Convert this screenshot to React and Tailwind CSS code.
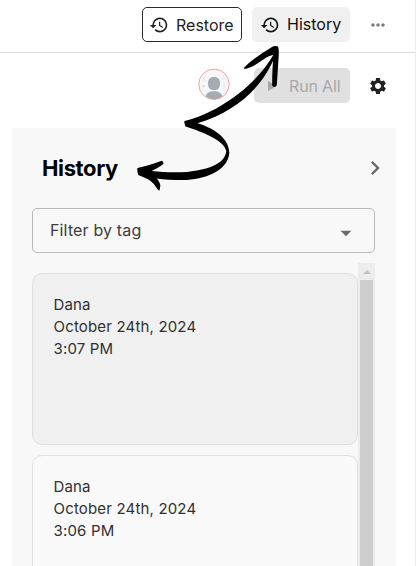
import {
  MdArrowDropDown,
  MdChevronRight,
  MdHistory,
  MdMoreHoriz,
  MdPlayArrow,
  MdSettings,
} from "react-icons/md";

const versions = [
  { author: "Dana", date: "October 24th, 2024", time: "3:07 PM", selected: true },
  { author: "Dana", date: "October 24th, 2024", time: "3:06 PM", selected: false },
];

function Avatar() {
  return (
    <svg className="size-8" viewBox="0 0 32 32">
      <circle cx="16" cy="16.3" r="15.2" fill="#f5f7fb" stroke="#f5a097" strokeWidth="1" />
      <path d="M5 10l3 4M24 12l3-3M25 20l2 2" stroke="#f3dcdc" strokeWidth="1" />
      <path d="M26 14v6M6 23l3 1" stroke="#dcebd8" strokeWidth="1" />
      <circle cx="5.5" cy="18" r="0.9" fill="#dfd36a" />
      <path d="M10 15.500c0-4.200 1.800-6.500 6-6.500s6 2.300 6 6.500c0 4.200-2 6.700-6 6.700s-6-2.500-6-6.700z" fill="#a6abb2" />
      <path d="M7.600 28.600c.6-3.400 3.400-5.400 8.400-5.400s7.800 2 8.400 5.400A15 15 0 0 1 7.600 28.600z" fill="#a6abb2" />
    </svg>
  );
}

function Header() {
  return (
    <header className="flex h-[53px] shrink-0 items-start gap-[10px] border-b border-[#dedede] pl-[142px] pt-[7px]">
      <button className="flex h-[35px] w-[100px] items-center gap-[7px] rounded-[5px] border border-[#2a2a2a] pl-[6px] text-base text-[#222]">
        <MdHistory size={20} />
        Restore
      </button>
      <button className="flex h-[35px] w-[98px] items-center gap-[7px] rounded-[5px] bg-[#f0f0f0] pl-[8px] text-base text-[#111]">
        <MdHistory size={20} />
        <span className="-mt-px">History</span>
      </button>
      <MdMoreHoriz className="ml-[8px] mt-[8px] text-[#777]" size={20} />
    </header>
  );
}

function Toolbar() {
  return (
    <div className="flex h-[75px] shrink-0 items-start pl-[198px] pt-[15px]">
      <Avatar />
      <button className="ml-6 flex h-[35px] w-24 items-center gap-[9px] rounded-[5px] bg-[#e0e0e0] pl-[8px] text-base tracking-[-0.01em] text-[#a8a8a8]">
        <MdPlayArrow size={18} />
        Run All
      </button>
      <MdSettings className="ml-[18px] mt-[8px] text-[#222]" size={20} />
    </div>
  );
}

function VersionCard({ version }) {
  return (
    <div
      className={`h-[172px] shrink-0 rounded-[10px] border border-[#dfdfdf] px-[20.5px] pt-[20px] text-[15px] leading-[22px] tracking-[0.17px] text-[#303030] ${
        version.selected ? "bg-[#f0f0f0]" : "bg-[#f9f9f9]"
      }`}
    >
      <p>{version.author}</p>
      <p>{version.date}</p>
      <p>{version.time}</p>
    </div>
  );
}

function Scrollbar() {
  return (
    <div className="flex w-[17px] shrink-0 flex-col items-center bg-[#ececec]">
      <div className="flex h-[17px] items-center">
        <svg width="8" height="4" viewBox="0 0 8 4">
          <path d="M0 4L4 0l4 4z" fill="#c2c2c2" />
        </svg>
      </div>
      <div className="w-[13px] flex-1 bg-[#cdcdcd]" />
    </div>
  );
}

function HistoryPanel() {
  return (
    <section className="ml-3 flex min-h-0 w-96 flex-1 flex-col bg-[#f8f8f8] pl-5 pr-[21px]">
      <div className="flex h-20 shrink-0 items-center justify-between pl-[10px]">
        <h2 className="text-[22px] font-bold tracking-[-0.017em] text-black">History</h2>
        <MdChevronRight className="-mr-[14px] text-[#6b6b6b]" size={28} />
      </div>
      <div className="flex h-[45px] shrink-0 items-center justify-between rounded-[5px] border border-[#b8b8b8] pl-[17px] pr-[15px] text-base tracking-[0.15px] text-[#3c3c3c]">
        <span className="-mt-px">Filter by tag</span>
        <MdArrowDropDown className="mt-[5px] text-[#6b6b6b]" size={26} />
      </div>
      <div className="mt-[10px] flex min-h-0 flex-1">
        <div className="flex flex-1 flex-col gap-[10px] overflow-hidden pt-[10px]">
          {versions.map((version) => (
            <VersionCard key={version.time} version={version} />
          ))}
        </div>
        <Scrollbar />
      </div>
    </section>
  );
}

// Hand-drawn arrow linking the History button to the panel title
function Annotation() {
  return (
    <svg
      className="pointer-events-none absolute left-0 top-0"
      width="416"
      height="566"
      viewBox="0 0 416 566"
      fill="#000"
    >
      <path d="M184.500 121C212 115 254 89 273.300 55L275 56C264 85 238 111 197.500 123.300C216 129 229 139 229.300 153C228 171 204 180 183 180C173 180 164 179.500 156.700 178.500C159 181 160.500 184 160.300 186L159.500 190.500C158 191 156 186.500 153.300 183.500C150 180 147 178.500 143 177L138.300 175C137.300 172 137 169.500 137.500 168C144 166.500 152 164.500 161.700 160.700C163 161.500 163.700 162.500 163.300 164C160 167 155 169 151.700 171C163 172.500 176 172.500 186.700 172C205 170 225 165 226.300 151C224 141 206 133 185.500 126.500C185 125 184 122.500 184.500 121Z" />
      <path d="M244 67.800C251 60 263 52.500 272 47C274 45.500 277 45.700 278.200 47C279 49 278.800 54 278.500 59L276.800 85C276 87.500 273 87.500 272.200 85.500C272 75 272.800 65 273.300 55C267 56 260 62 256.700 64C252 67 248 68.500 244.500 69Z" />
    </svg>
  );
}

export default function App() {
  return (
    <div className="relative flex h-[566px] w-[416px] flex-col overflow-hidden border-r border-[#ececec] bg-white font-['Inter',sans-serif]">
      <Header />
      <Toolbar />
      <HistoryPanel />
      <Annotation />
    </div>
  );
}
